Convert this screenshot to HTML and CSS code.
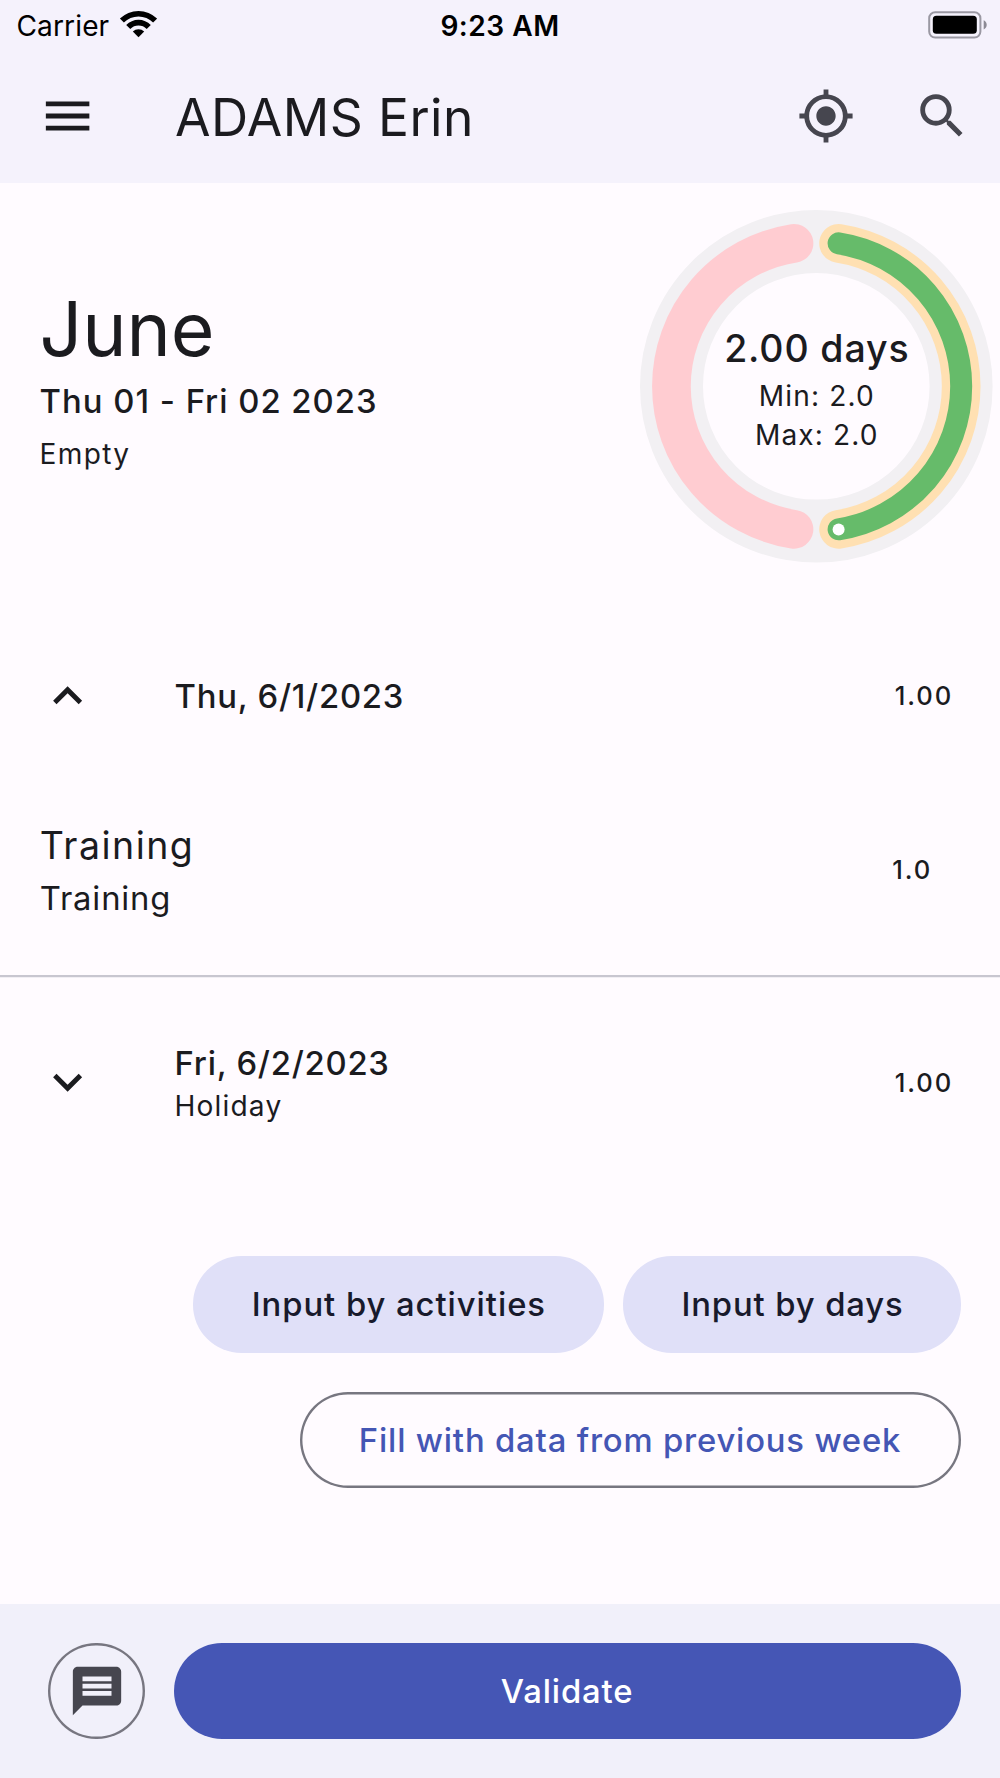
FILE: index.html
```html
<!DOCTYPE html>
<html lang="en">
<head>
<meta charset="utf-8">
<title>ADAMS Erin</title>
<link rel="stylesheet" href="styles.css">
</head>
<body>
<div class="screen">
  <header class="top">
    <div class="status">
      <div class="carrier">
        <span>Carrier</span>
        <svg class="wifi" viewBox="-19.500 -27.200 38 28">
          <path d="M-18.600-18.600A26.300 26.300 0 0 1 18.600-18.600L14.600-14.600A20.600 20.600 0 0 0-14.600-14.600Z"/>
          <path d="M-12.300-12.300A17.400 17.400 0 0 1 12.300-12.300L8.200-8.200A11.600 11.600 0 0 0-8.200-8.200Z"/>
          <path d="M-5.700-5.700A8.100 8.100 0 0 1 5.700-5.700L0 0Z"/>
        </svg>
      </div>
      <span class="time">9:23 AM</span>
      <div class="power">
        <svg class="battery" viewBox="0 0 60 28">
          <rect x="1.200" y="1.200" width="51.200" height="25.400" rx="6" fill="none" stroke="#9a98a2" stroke-width="2"/>
          <rect x="4.800" y="4.800" width="44" height="18" rx="3.600"/>
          <path d="M55.700 9.200c2 .9 3 2.600 3 4.600s-1 3.700-3 4.600z" fill="#8c8a94"/>
        </svg>
      </div>
    </div>
    <div class="appbar">
      <svg class="icon dark" viewBox="-.25 0 24 24"><path d="M3 18h18v-2H3v2zm0-5h18v-2H3v2zm0-7v2h18V6H3z"/></svg>
      <h1 class="title">ADAMS Erin</h1>
      <svg class="icon" viewBox="0 0 24 24"><path d="M12 8c-2.210 0-4 1.790-4 4s1.790 4 4 4 4-1.790 4-4-1.790-4-4-4zm8.940 3A8.994 8.994 0 0 0 13 3.060V1h-2v2.060A8.994 8.994 0 0 0 3.060 11H1v2h2.060A8.994 8.994 0 0 0 11 20.940V23h2v-2.060A8.994 8.994 0 0 0 20.940 13H23v-2h-2.060zM12 19c-3.870 0-7-3.130-7-7s3.130-7 7-7 7 3.130 7 7-3.130 7-7 7z"/></svg>
      <svg class="icon" viewBox="0 0 24 24"><path d="M15.500 14h-.79l-.28-.27A6.471 6.471 0 0 0 16 9.500 6.500 6.500 0 1 0 9.500 16c1.610 0 3.090-.59 4.230-1.570l.27.28v.79l5 4.990L20.490 19l-4.990-5zm-6 0C7.010 14 5 11.990 5 9.500S7.010 5 9.500 5 14 7.010 14 9.500 11.990 14 9.500 14z"/></svg>
    </div>
  </header>

  <main class="content">
    <section class="summary">
      <div class="period">
        <h2 class="month">June</h2>
        <div class="range">Thu 01 - Fri 02 2023</div>
        <div class="state">Empty</div>
      </div>
      <div class="gauge">
        <svg class="ring" viewBox="-177.300 -177.300 354 354">
          <circle r="144.800" stroke="#f2f0f3" stroke-width="63"/>
          <path d="M-22.300-143A144.700 144.700 0 0 0-22.300 143" stroke="#ffccd1" stroke-width="38.700"/>
          <path d="M22.300-143A144.700 144.700 0 0 1 22.300 143" stroke="#ffe0b2" stroke-width="38.700"/>
          <path d="M22.300-143A144.700 144.700 0 0 1 22.300 143" stroke="#66bb6a" stroke-width="22"/>
          <circle class="knob" cx="22.300" cy="143.300" r="6"/>
        </svg>
        <div class="reading">
          <strong class="total">2.00 days</strong>
          <span class="limit">Min: 2.0</span>
          <span class="limit">Max: 2.0</span>
        </div>
      </div>
    </section>

    <section class="day">
      <svg class="chevron" viewBox="-.25 0 24 24"><path d="M12 8l-6 6 1.410 1.410L12 10.830l4.590 4.580L18 14z"/></svg>
      <div class="day-text"><div class="date">Thu, 6/1/2023</div></div>
      <span class="value">1.00</span>
    </section>
    <section class="entry">
      <div class="entry-text">
        <div class="activity">Training</div>
        <div class="detail">Training</div>
      </div>
      <span class="value">1.0</span>
    </section>
    <section class="day day-last">
      <svg class="chevron" viewBox="-.25 0 24 24"><path d="M16.590 8.590L12 13.170 7.410 8.590 6 10l6 6 6-6z"/></svg>
      <div class="day-text">
        <div class="date">Fri, 6/2/2023</div>
        <div class="note">Holiday</div>
      </div>
      <span class="value">1.00</span>
    </section>

    <section class="actions">
      <button class="btn tonal activities">Input by activities</button>
      <button class="btn tonal days">Input by days</button>
      <button class="btn outlined">Fill with data from previous week</button>
    </section>
  </main>

  <footer class="bottom">
    <button class="comment" aria-label="Comment">
      <svg class="icon" viewBox="0 0 24 24"><path d="M20 2H4c-1.100 0-1.990.9-1.990 2L2 22l4-4h14c1.100 0 2-.9 2-2V4c0-1.100-.9-2-2-2zm-2 12H6v-2h12v2zm0-3H6V9h12v2zm0-3H6V6h12v2z"/></svg>
    </button>
    <button class="btn filled">Validate</button>
  </footer>
</div>
</body>
</html>
```
FILE: styles.css
```css
* { box-sizing: border-box; margin: 0; padding: 0; }

body {
  font-family: Inter, "Liberation Sans", sans-serif;
  color: #1b1b1f;
  background: #fffbff;
}

button { font: inherit; border: 0; background: none; }
svg { display: block; flex: none; }

.screen {
  width: 1000px;
  height: 1778px;
  display: flex;
  flex-direction: column;
  background: #fffbff;
  overflow: hidden;
}

.top { height: 183.400px; background: #f5f2fc; }

.status {
  display: grid;
  grid-template-columns: 1fr auto 1fr;
  align-items: center;
  height: 48.400px;
  padding: 3px 12.500px 0 16.500px;
  color: #000;
  font-size: 28.100px;
  line-height: 34px;
}
.carrier { display: flex; align-items: center; gap: 10px; letter-spacing: .1px; }
.wifi { width: 38px; height: 28px; margin-top: -3px; }
.time { font-weight: 600; letter-spacing: .5px; margin-left: -4px; }
.power { display: flex; justify-content: flex-end; }
.battery { width: 60px; height: 28px; margin-top: -2px; }

.appbar {
  display: flex;
  align-items: center;
  height: 135px;
  padding: 0 29.300px 0 38.400px;
}
.icon { width: 58px; height: 58px; fill: #46464f; }
.icon + .icon { margin-left: 57.900px; }
.dark { fill: #1b1b1f; }
.title {
  flex: 1;
  margin-left: 78.600px;
  padding-top: 1.500px;
  font-size: 51.500px;
  font-weight: 400;
  line-height: 68px;
  letter-spacing: .43px;
}

.content { flex: 1; display: flex; flex-direction: column; }

.summary {
  display: flex;
  justify-content: space-between;
  height: 440px;
  padding: 26px 6.700px 0 39.600px;
}
.period { padding-top: 70.300px; }
.month { font-size: 75px; font-weight: 400; line-height: 97px; letter-spacing: -.1px; }
.range { font-size: 32.800px; font-weight: 500; line-height: 48px; letter-spacing: 1px; }
.state { margin-top: 10.500px; font-size: 28.100px; line-height: 38px; letter-spacing: 1.300px; }

.gauge { display: grid; width: 354px; height: 354px; }
.gauge > * { grid-area: 1 / 1; }
.ring { width: 354px; height: 354px; fill: none; stroke-linecap: round; }
.ring .knob { fill: #fff; }
.reading { display: flex; flex-direction: column; align-items: center; padding: 114px 0 0 1px; }
.total { font-size: 37.500px; font-weight: 500; line-height: 51px; letter-spacing: .87px; }
.limit { font-size: 28.100px; line-height: 38.700px; letter-spacing: 1.120px; }
.total + .limit { margin-top: 3px; }

.day {
  display: flex;
  align-items: center;
  height: 145.500px;
  padding: 0 0 0 38.400px;
}
.day-last { height: 212px; }
.chevron { width: 58px; height: 58px; margin-top: -1px; fill: #1b1b1f; }
.day-text { flex: 1; margin-left: 78.200px; }
.date { font-size: 32.800px; font-weight: 500; line-height: 46px; letter-spacing: .74px; }
.day-last .day-text { margin-top: -1px; }
.note { margin-top: 1px; font-size: 28.100px; line-height: 38px; letter-spacing: 1.150px; }
.value {
  width: 105.200px;
  font-size: 25.600px;
  font-weight: 500;
  line-height: 38px;
  letter-spacing: 1.920px;
}

.entry {
  display: flex;
  align-items: center;
  height: 208px;
  padding: 0 2.500px 3px 39.800px;
  border-bottom: 2px solid #c8c6d0;
  box-shadow: 0 1px #f1eef4;
}
.entry-text { flex: 1; padding-top: 2.500px; }
.activity { font-size: 37.500px; line-height: 52px; letter-spacing: 1.470px; }
.detail { font-size: 32.800px; line-height: 52px; letter-spacing: .83px; }

.actions {
  display: flex;
  flex-wrap: wrap;
  justify-content: flex-end;
  gap: 38.800px 19.500px;
  padding: 67.300px 39px 0;
}
.btn {
  display: flex;
  align-items: center;
  justify-content: center;
  height: 96.600px;
  border-radius: 48.300px;
  font-size: 32.800px;
  font-weight: 500;
  line-height: 46px;
  letter-spacing: .87px;
}
.tonal { background: #e0e0f8; color: #181a2c; padding-left: 1px; }
.activities { width: 410.400px; letter-spacing: .95px; }
.days { width: 338px; }
.outlined {
  width: 661px;
  padding-right: 1px;
  box-shadow: inset 0 0 0 2.400px #777680;
  color: #4456b4;
  letter-spacing: .82px;
}

.bottom {
  display: flex;
  gap: 29.200px;
  height: 174px;
  padding: 38.500px 39px 0 48.400px;
  background: #f1f0fa;
}
.comment {
  display: flex;
  align-items: center;
  justify-content: center;
  width: 96.600px;
  height: 96.600px;
  box-shadow: inset 0 0 0 2.400px #777680;
  border-radius: 50%;
}
.filled { flex: 1; background: #4556b5; color: #fff; padding-right: 1px; }
```
